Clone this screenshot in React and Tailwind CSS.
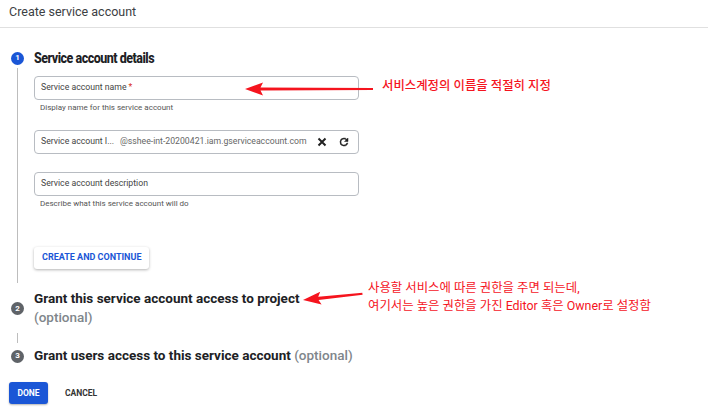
import React from "react";

const StepDot = ({ n, active }) => (
  <div
    className={`w-[13px] h-[13px] shrink-0 rounded-full flex items-center justify-center text-[8px] font-bold text-white ${
      active ? "bg-[#1a56d6]" : "bg-[#5f6368]"
    }`}
  >
    {n}
  </div>
);

const Field = ({ children }) => (
  <div className="h-[24px] w-[325px] border border-[#b8bcc2] rounded-[4px] flex items-center px-[6px] text-[8.7px] text-[#444]">
    {children}
  </div>
);

const Arrow = ({ className, width, angle }) => (
  <svg
    className={className}
    width={width}
    height="20"
    viewBox={`0 0 ${width} 20`}
    style={{ transform: `rotate(${angle}deg)`, transformOrigin: "0 10px" }}
  >
    <path
      d={`M0 10 L18 3.5 L15.5 8.4 L${width} 9 L${width} 11 L15.5 11.6 L18 16.5 Z`}
      fill="#f5141e"
    />
  </svg>
);

export default function App() {
  return (
    <div
      className="relative w-[708px] h-[411px] bg-white overflow-hidden text-[#202124]"
      style={{ fontFamily: "Roboto, 'Noto Sans CJK KR', sans-serif" }}
    >
      <div className="h-[28px] border-b border-[#e0e0e0] pl-[9px] pb-[2px] flex items-center text-[12.5px] text-[#3c4043]">
        Create service account
      </div>

      <div className="pl-[11px] pt-[22px]">
        {/* step 1 */}
        <div className="flex items-center gap-[10px] h-[16px]">
          <StepDot n="1" active />
          <div className="text-[12.5px] font-extrabold leading-none tracking-[-0.5px] scale-y-[1.22] origin-left">
            Service account details
          </div>
        </div>
        <div className="flex">
          <div className="w-[13px] flex justify-center">
            <div className="w-px bg-[#bdbdbd] mt-[2px] h-[215px]" />
          </div>
          <div className="pl-[10px] pt-[10px]">
            <Field>
              <span>Service account name</span>
              <span className="text-[#d93025] ml-[2px]">*</span>
            </Field>
            <div className="text-[8px] text-[#555] pl-[6px] mt-[4px] leading-[8px]">
              Display name for this service account
            </div>
            <div className="mt-[18px]">
              <Field>
                <span>Service account I...</span>
                <span className="ml-[6px] text-[#666]">@sshee-int-20200421.iam.gserviceaccount.com</span>
                <span className="ml-auto flex items-center gap-[11px] mr-[2px]">
                  <svg width="10" height="10" viewBox="0 0 10 10">
                    <path d="M1.5 1.5 L8.5 8.5 M8.5 1.5 L1.5 8.5" stroke="#222" strokeWidth="2" />
                  </svg>
                  <svg width="12" height="12" viewBox="0 0 24 24">
                    <path
                      d="M17.65 6.35A7.96 7.96 0 0 0 12 4a8 8 0 1 0 7.73 10h-2.08A6 6 0 1 1 12 6c1.66 0 3.14.69 4.22 1.78L13 11h7V4l-2.35 2.35z"
                      fill="#222"
                      stroke="#222"
                      strokeWidth="1"
                    />
                  </svg>
                </span>
              </Field>
            </div>
            <div className="mt-[18px]">
              <Field>Service account description</Field>
            </div>
            <div className="text-[8px] text-[#555] pl-[6px] mt-[4px] leading-[8px]">
              Describe what this service account will do
            </div>
            <button className="mt-[39px] h-[22px] px-[8px] rounded-[3px] bg-white shadow-[0_1px_3px_rgba(0,0,0,0.3)] text-[9px] font-bold text-[#1a56d6]">
              CREATE AND CONTINUE
            </button>
          </div>
        </div>

        {/* step 2 */}
        <div className="flex mt-[6px]">
          <div className="w-[13px] flex flex-col items-center pt-[13px]">
            <StepDot n="2" />
            <div className="w-px bg-[#bdbdbd] h-[10px] mt-[18px]" />
          </div>
          <div className="pl-[10px] text-[13.5px] leading-[19px]">
            <div className="font-bold">Grant this service account access to project</div>
            <div className="text-[#80868b] font-medium">(optional)</div>
          </div>
        </div>

        {/* step 3 */}
        <div className="flex items-center gap-[10px] mt-[6px] h-[14px]">
          <StepDot n="3" />
          <div className="text-[13.5px] leading-none">
            <span className="font-bold">Grant users access to this service account</span>{" "}
            <span className="text-[#80868b] font-medium">(optional)</span>
          </div>
        </div>
      </div>

      <div className="flex items-center gap-[17px] pl-[9px] mt-[19px]">
        <button className="h-[22px] w-[39px] rounded-[3px] bg-[#1a56d6] text-white text-[8.5px] font-bold shadow-[0_1px_2px_rgba(0,0,0,0.3)]">
          DONE
        </button>
        <button className="text-[8.5px] font-bold text-[#333]">CANCEL</button>
      </div>

      {/* annotations */}
      <Arrow className="absolute left-[245px] top-[79px]" width={128} angle={0} />
      <div className="absolute left-[382px] top-[80px] text-[12.4px] text-[#f5141e] font-medium leading-none">
        서비스계정의 이름을 적절히 지정
      </div>
      <Arrow className="absolute left-[303px] top-[290px]" width={60} angle={-6} />
      <div className="absolute left-[368px] top-[279px] text-[12.4px] text-[#f5141e] leading-[18px]">
        <div>사용할 서비스에 따른 권한을 주면 되는데,</div>
        <div>여기서는 높은 권한을 가진 Editor 혹은 Owner로 설정함</div>
      </div>
    </div>
  );
}
